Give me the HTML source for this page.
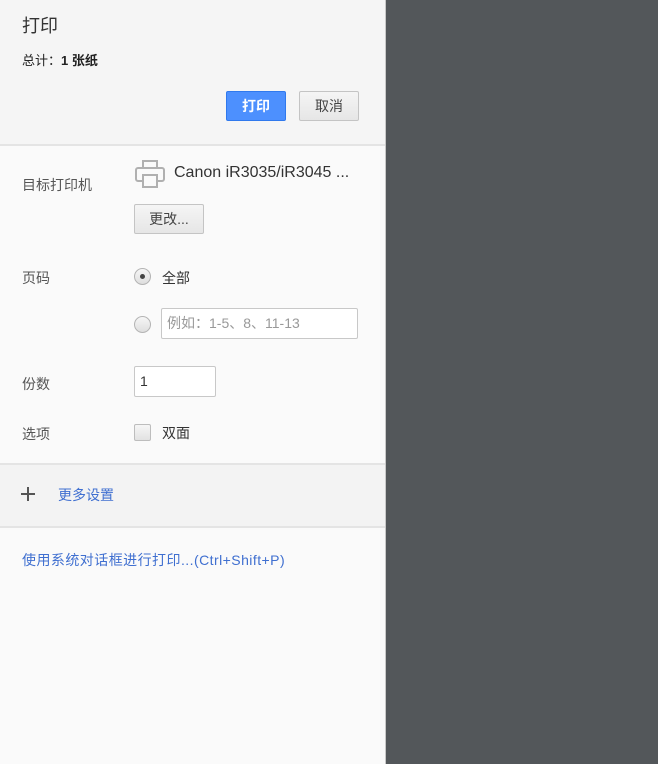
<!DOCTYPE html>
<html><head><meta charset="utf-8"><style>
*{margin:0;padding:0;box-sizing:border-box}
body{width:658px;height:764px;background:#53575a;font-family:"Liberation Sans","Noto Sans CJK SC",sans-serif;position:relative;overflow:hidden;color:#333}
#p{position:absolute;left:0;top:0;width:386px;height:764px;background:#fafafa;border-right:1px solid #c8c8c8}
.a{position:absolute}
.hdr{left:0;top:0;width:385px;height:146px;background:#f5f5f5;border-bottom:2px solid #e4e4e4}
.btn{position:absolute;height:30px;border-radius:2px;font-size:14px;text-align:center;line-height:28px}
.lbl{font-size:14px;color:#555}
.more{left:0;top:463px;width:385px;height:65px;background:#f3f3f3;border-top:2px solid #e4e4e4;border-bottom:2px solid #e4e4e4}
.rad{position:absolute;width:17px;height:17px;border-radius:50%;border:1px solid #b4b4b4;background:linear-gradient(#f6f6f6,#dedede)}
.inp{position:absolute;background:#fff;border:1px solid #c8c8c8;border-radius:2px;font-size:14px;padding-left:5px}
</style></head><body>
<div id="p">
<div class="a hdr"></div>
<div class="a" style="left:22px;top:12px;font-size:18px;color:#333">打印</div>
<div class="a" style="left:22px;top:50px;font-size:13px;color:#222">总计：<b>1 张纸</b></div>
<div class="btn" style="left:226px;top:91px;width:60px;background:#4d90fe;border:1px solid #3079ed;color:#fff;font-weight:bold">打印</div>
<div class="btn" style="left:299px;top:91px;width:60px;background:linear-gradient(#f5f5f5,#e6e6e6);border:1px solid #c4c4c4;color:#444">取消</div>
<div class="a lbl" style="left:22px;top:175px">目标打印机</div>
<svg class="a" style="left:135px;top:160px" width="30" height="28" viewBox="0 0 30 28" fill="#fafafa" stroke="#b0b0b0" stroke-width="2"><rect x="8" y="1" width="14" height="7"/><rect x="1" y="8" width="28" height="13" rx="2"/><rect x="8" y="15" width="14" height="12"/></svg>
<div class="a" style="left:174px;top:164px;font-size:16px;color:#333">Canon iR3035/iR3045 ...</div>
<div class="btn" style="left:134px;top:204px;width:70px;background:linear-gradient(#f5f5f5,#e6e6e6);border:1px solid #c4c4c4;color:#444">更改...</div>
<div class="a lbl" style="left:22px;top:268px">页码</div>
<div class="rad" style="left:134px;top:268px"><div style="position:absolute;left:5px;top:5px;width:5px;height:5px;border-radius:50%;background:#444"></div></div>
<div class="a" style="left:162px;top:268px;font-size:14px;color:#333">全部</div>
<div class="rad" style="left:134px;top:316px"></div>
<div class="inp" style="left:161px;top:308px;width:197px;height:31px;line-height:29px;color:#999">例如：1-5、8、11-13</div>
<div class="a lbl" style="left:22px;top:374px">份数</div>
<div class="inp" style="left:134px;top:366px;width:82px;height:31px;line-height:29px;color:#333">1</div>
<div class="a lbl" style="left:22px;top:424px">选项</div>
<div class="a" style="left:134px;top:424px;width:17px;height:17px;border:1px solid #bdbdbd;border-radius:2px;background:linear-gradient(#f6f6f6,#e2e2e2)"></div>
<div class="a" style="left:162px;top:423px;font-size:14px;color:#333">双面</div>
<div class="a more"></div>
<div class="a" style="left:21px;top:493px;width:14px;height:2px;background:#555"></div>
<div class="a" style="left:27px;top:487px;width:2px;height:14px;background:#555"></div>
<div class="a" style="left:58px;top:485px;font-size:14px;color:#3f6fd0">更多设置</div>
<div class="a" style="left:22px;top:550px;font-size:14px;color:#3f6fd0;letter-spacing:0.45px">使用系统对话框进行打印...(Ctrl+Shift+P)</div>
</div>
</body></html>
